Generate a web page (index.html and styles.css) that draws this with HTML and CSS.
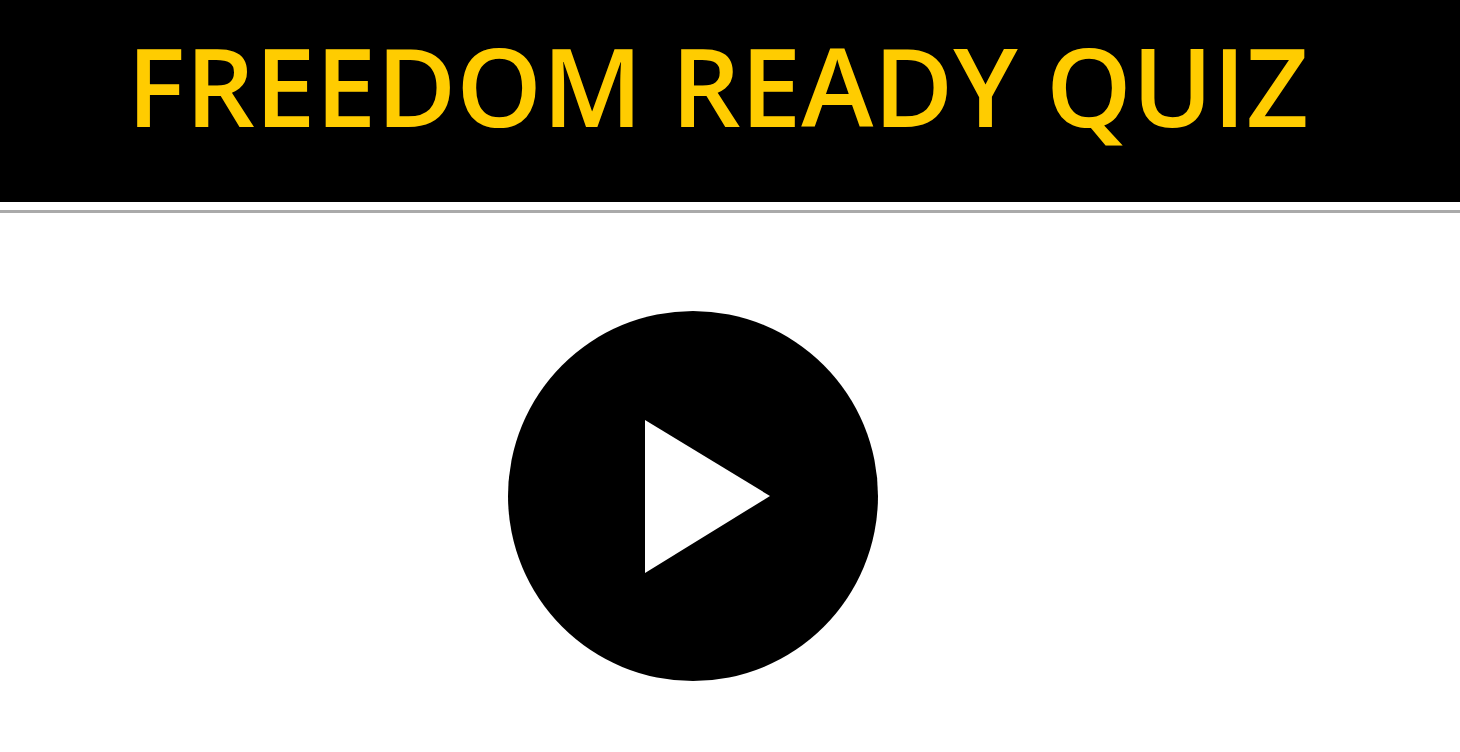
FILE: index.html
```html
<!DOCTYPE html>
<html lang="en">
<head>
<meta charset="utf-8">
<meta name="viewport" content="width=device-width, initial-scale=1">
<title>Freedom Ready Quiz</title>
<link rel="stylesheet" href="styles.css">
</head>

<body>
<header class="banner">
	<h1 class="title">FREEDOM READY QUIZ</h1>
</header>

<main class="start">
	<button class="play" type="button" aria-label="Play">
		<svg class="play-icon" viewBox="0 0 370 370" aria-hidden="true">
			<circle cx="185" cy="185" r="185" fill="#000"/>
			<path d="M137 109 L262 185 L137 262 Z" fill="#fff"/>
		</svg>
	</button>
</main>
</body>
</html>
```

FILE: styles.css
```css
body {
	margin: 0;
	background-color: #fff;
	font-family: "Open Sans", "Noto Sans", sans-serif;
}

.banner {
	padding: 15px 24px 47px 0;
	background-color: #000;
	text-align: center;
}

.title {
	margin: 0;
	font-size: 109px;
	font-weight: 600;
	line-height: 140px;
	color: #fc0;
	white-space: nowrap;
}

.start {
	display: flex;
	justify-content: center;
	margin-top: 8px;
	padding: 98px 74px 70px 0;
	border-top: 3px solid #aaa;
}

.play {
	width: 370px;
	padding: 0;
	border: none;
	border-radius: 50%;
	background: none;
	cursor: pointer;
}

.play-icon {
	display: block;
	width: 100%;
}
```
